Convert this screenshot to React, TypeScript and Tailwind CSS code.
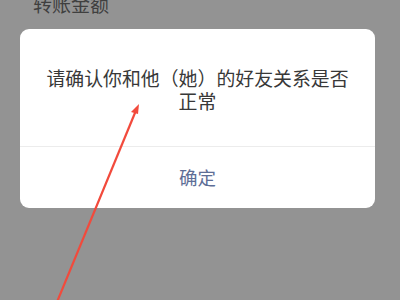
export default function App() {
  const font = '"Noto Sans CJK SC", "Noto Sans", sans-serif';
  return (
    <div className="relative w-[400px] h-[300px] overflow-hidden bg-[#939393]" style={{ fontFamily: font }}>
      <div className="pl-[33px] mt-[-6px] h-[20px] text-[19px] leading-[20px] text-[#3f3f3f]">转账金额</div>
      <div className="mt-[15px] mx-[20px] w-[355px] h-[179px] rounded-[9px] bg-white flex flex-col">
        <div className="h-[117px] pt-[37px] px-[22px] text-center text-[18.9px] leading-[23px] text-[#383838]">
          请确认你和他（她）的好友关系是否正常
        </div>
        <div className="h-px bg-[#ececec]" />
        <div className="flex-1 flex items-center justify-center text-[18.5px] text-[#5e6e96]">确定</div>
      </div>
      <svg className="absolute left-0 top-0" width="400" height="300" viewBox="0 0 400 300">
        <line x1="57" y1="302" x2="137" y2="108" stroke="#f24a3c" strokeWidth="2.2" />
        <polygon points="139,104 131,112 138,114" fill="#f24a3c" />
      </svg>
    </div>
  );
}
